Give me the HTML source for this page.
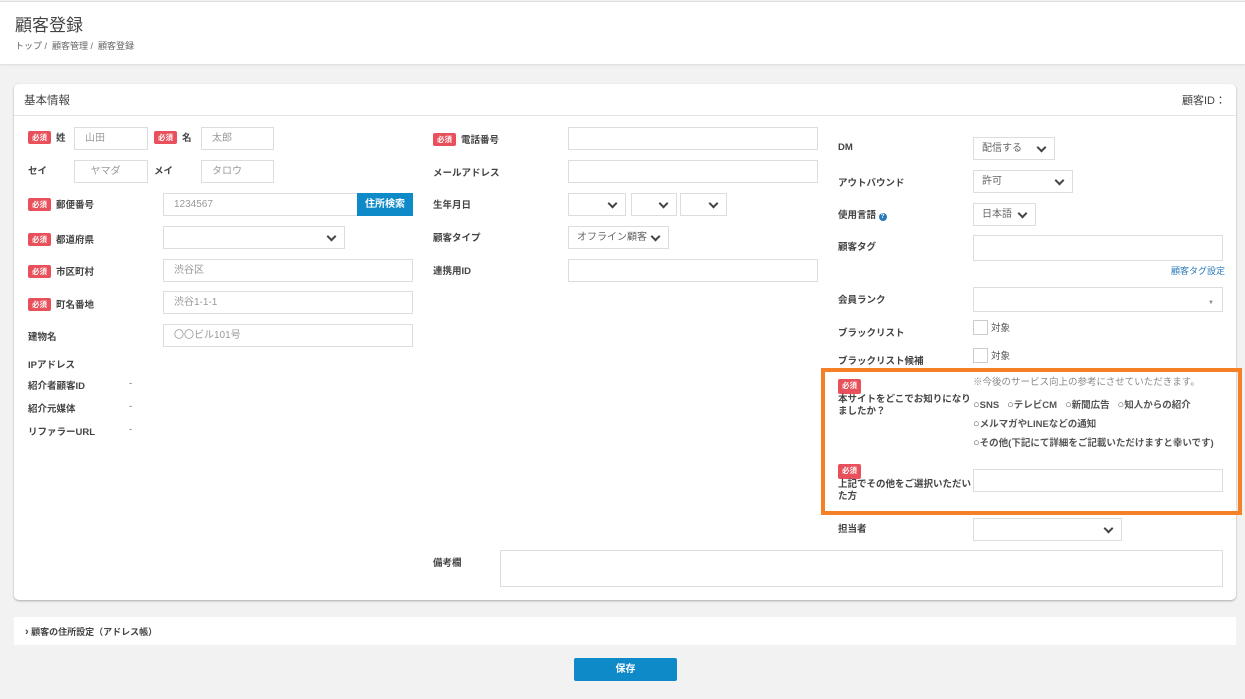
<!DOCTYPE html><html><head><meta charset="utf-8"><style>
*{box-sizing:border-box;margin:0;padding:0}
body{width:1245px;height:699px;background:#f2f2f2;font-family:"Liberation Sans","Noto Sans CJK JP",sans-serif;color:#555;position:relative;overflow:hidden}
.a{position:absolute}
.hdr{left:0;top:1px;width:1245px;height:63px;background:#fff;border-top:1px solid #ddd;box-shadow:0 1px 2px rgba(0,0,0,.1)}
.card{left:14px;top:84px;width:1222px;height:516px;background:#fff;border-radius:5px;box-shadow:0 1px 2px rgba(0,0,0,.3)}
.lbl{font-size:9.5px;font-weight:bold;color:#444;white-space:nowrap;margin-top:-3px}
.req{display:inline-block;background:#e8505b;color:#fff;font-size:7.5px;padding:1px 4px;border-radius:2px;margin-right:5px;font-weight:bold;vertical-align:1px}
.in{border:1px solid #ddd;background:#fff;height:23px;font-size:10px;color:#999;padding:3px 10px;line-height:15px;white-space:nowrap}
.sel{border:1px solid #ddd;background:#fff;height:23px;font-size:10px;color:#666;padding:3px 8px;line-height:15px}
.sel:after{content:"";position:absolute;right:9px;top:6px;width:5px;height:5px;border-right:2px solid #444;border-bottom:2px solid #444;transform:rotate(45deg)}
.sm{font-size:9.5px;color:#555;white-space:nowrap}
.d{font-size:9.5px;color:#666}
.r{font-size:9.5px;font-weight:bold;color:#555;white-space:nowrap;margin-top:-3px}
</style></head><body>
<div class="a hdr"><div class="a" style="left:15px;top:9px;font-size:17px;color:#444">顧客登録</div>
<div class="a" style="left:15px;top:37px;font-size:9px;color:#666">トップ / &nbsp;顧客管理 / &nbsp;顧客登録</div></div>
<div class="a card">
<div class="a" style="left:0;top:0;width:1222px;height:32px;border-bottom:1px solid #e5e5e5"></div>
<div class="a" style="left:10px;top:8px;font-size:11.5px;color:#444">基本情報</div>
<div class="a" style="right:10px;top:8px;font-size:11px;color:#444">顧客ID：</div>
</div>
<div class="a lbl" style="left:28px;top:133px"><span class="req">必須</span>姓</div>
<div class="a in" style="left:74px;top:127px;width:74px">山田</div>
<div class="a lbl" style="left:154px;top:133px"><span class="req">必須</span>名</div>
<div class="a in" style="left:201px;top:127px;width:73px">太郎</div>
<div class="a lbl" style="left:28px;top:166px">セイ</div>
<div class="a in" style="left:74px;top:160px;width:74px">&nbsp;&nbsp;ヤマダ</div>
<div class="a lbl" style="left:154px;top:166px">メイ</div>
<div class="a in" style="left:201px;top:160px;width:73px">タロウ</div>
<div class="a lbl" style="left:28px;top:200px"><span class="req">必須</span>郵便番号</div>
<div class="a in" style="left:163px;top:193px;width:195px">1234567</div>
<div class="a" style="left:357px;top:193px;width:56px;height:23px;background:#0e8ac8;color:#fff;font-size:10px;font-weight:bold;text-align:center;line-height:23px">住所検索</div>
<div class="a lbl" style="left:28px;top:235px"><span class="req">必須</span>都道府県</div>
<div class="a sel" style="left:163px;top:226px;width:182px"></div>
<div class="a lbl" style="left:28px;top:267px"><span class="req">必須</span>市区町村</div>
<div class="a in" style="left:163px;top:259px;width:250px">渋谷区</div>
<div class="a lbl" style="left:28px;top:300px"><span class="req">必須</span>町名番地</div>
<div class="a in" style="left:163px;top:291px;width:250px">渋谷1-1-1</div>
<div class="a lbl" style="left:28px;top:332px">建物名</div>
<div class="a in" style="left:163px;top:324px;width:250px">〇〇ビル101号</div>
<div class="a lbl" style="left:28px;top:360px">IPアドレス</div>
<div class="a lbl" style="left:28px;top:381px">紹介者顧客ID</div><div class="a d" style="left:129px;top:378px">-</div>
<div class="a lbl" style="left:28px;top:404px">紹介元媒体</div><div class="a d" style="left:129px;top:401px">-</div>
<div class="a lbl" style="left:28px;top:427px">リファラーURL</div><div class="a d" style="left:129px;top:424px">-</div>
<div class="a lbl" style="left:433px;top:135px"><span class="req">必須</span>電話番号</div>
<div class="a in" style="left:568px;top:127px;width:250px"></div>
<div class="a lbl" style="left:433px;top:168px">メールアドレス</div>
<div class="a in" style="left:568px;top:160px;width:250px"></div>
<div class="a lbl" style="left:433px;top:200px">生年月日</div>
<div class="a sel" style="left:568px;top:193px;width:58px"></div>
<div class="a sel" style="left:631px;top:193px;width:46px"></div>
<div class="a sel" style="left:680px;top:193px;width:47px"></div>
<div class="a lbl" style="left:433px;top:233px">顧客タイプ</div>
<div class="a sel" style="left:568px;top:226px;width:101px">オフライン顧客</div>
<div class="a lbl" style="left:433px;top:266px">連携用ID</div>
<div class="a in" style="left:568px;top:259px;width:250px"></div>
<div class="a lbl" style="left:433px;top:558px">備考欄</div>
<div class="a in" style="left:500px;top:550px;width:723px;height:37px"></div>
<div class="a lbl" style="left:838px;top:145px">DM</div>
<div class="a sel" style="left:973px;top:137px;width:82px">配信する</div>
<div class="a lbl" style="left:838px;top:178px">アウトバウンド</div>
<div class="a sel" style="left:973px;top:170px;width:100px">許可</div>
<div class="a lbl" style="left:838px;top:210px">使用言語 <span style="display:inline-block;width:8px;height:8px;border-radius:50%;background:#2a7ab8;color:#fff;font-size:6px;text-align:center;line-height:8px">?</span></div>
<div class="a sel" style="left:973px;top:203px;width:63px">日本語</div>
<div class="a lbl" style="left:838px;top:242px">顧客タグ</div>
<div class="a in" style="left:973px;top:235px;width:250px;height:26px"></div>
<div class="a" style="left:1171px;top:264px;font-size:9px;color:#2a7ab8">顧客タグ設定</div>
<div class="a lbl" style="left:838px;top:295px">会員ランク</div>
<div class="a in" style="left:973px;top:287px;width:250px;height:25px"><span style="position:absolute;right:8px;top:8px;font-size:6px;color:#888">▼</span></div>
<div class="a lbl" style="left:838px;top:328px">ブラックリスト</div>
<div class="a" style="left:973px;top:320px;width:15px;height:15px;border:1px solid #ccc"></div>
<div class="a sm" style="left:991px;top:320px">対象</div>
<div class="a lbl" style="left:838px;top:356px">ブラックリスト候補</div>
<div class="a" style="left:973px;top:348px;width:15px;height:15px;border:1px solid #ccc"></div>
<div class="a sm" style="left:991px;top:348px">対象</div>
<div class="a" style="left:821px;top:368px;width:421px;height:147px;border:4px solid #f58025"></div>
<div class="a sm" style="left:973px;top:374px;color:#888">※今後のサービス向上の参考にさせていただきます。</div>
<div class="a lbl" style="left:838px;top:382px;line-height:12.5px"><span class="req">必須</span><br>本サイトをどこでお知りになり<br>ましたか？</div>
<div class="a r" style="left:973px;top:400px"><span style="font-weight:normal;font-size:11px">○</span>SNS &nbsp;&nbsp;<span style="font-weight:normal;font-size:11px">○</span>テレビCM &nbsp;&nbsp;<span style="font-weight:normal;font-size:11px">○</span>新聞広告 &nbsp;&nbsp;<span style="font-weight:normal;font-size:11px">○</span>知人からの紹介</div>
<div class="a r" style="left:973px;top:419px"><span style="font-weight:normal;font-size:11px">○</span>メルマガやLINEなどの通知</div>
<div class="a r" style="left:973px;top:438px"><span style="font-weight:normal;font-size:11px">○</span>その他(下記にて詳細をご記載いただけますと幸いです)</div>
<div class="a lbl" style="left:838px;top:467px;line-height:12.5px"><span class="req">必須</span><br>上記でその他をご選択いただい<br>た方</div>
<div class="a in" style="left:973px;top:469px;width:250px"></div>
<div class="a lbl" style="left:838px;top:524px">担当者</div>
<div class="a sel" style="left:973px;top:518px;width:149px"></div>
<div class="a" style="left:14px;top:617px;width:1222px;height:28px;background:#fff"></div>
<div class="a lbl" style="left:25px;top:628px;font-size:9px"><b style="font-size:11px">›</b>&nbsp;顧客の住所設定（アドレス帳）</div>
<div class="a" style="left:574px;top:658px;width:103px;height:23px;background:#0e8ac8;border-radius:2px;color:#fff;font-size:10px;font-weight:bold;text-align:center;line-height:23px">保存</div>
</body></html>
